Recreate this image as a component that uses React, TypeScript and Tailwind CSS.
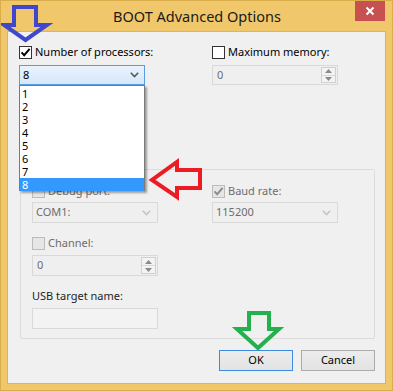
import React from "react";

function Check({ checked, disabled }: { checked?: boolean; disabled?: boolean }) {
  return (
    <span
      className={
        disabled
          ? "w-[13px] h-[13px] shrink-0 border border-[#bcbcbc] bg-[#e6e6e6] flex items-center justify-center"
          : "w-[13px] h-[13px] shrink-0 border border-[#333333] bg-white flex items-center justify-center"
      }
    >
      {checked && (
        <svg width="11" height="11" viewBox="0 0 11 11">
          <path d="M1.5 5.3 L4.2 8.2 L9.6 1.8" fill="none" stroke={disabled ? "#8c8c8c" : "#000"} strokeWidth="1.9" />
        </svg>
      )}
    </span>
  );
}

function CheckRow({ label, checked, disabled }: { label: string; checked?: boolean; disabled?: boolean }) {
  return (
    <div className="h-[16px] flex items-center gap-[3px] whitespace-nowrap">
      <Check checked={checked} disabled={disabled} />
      <span className={disabled ? "text-[#6d6d6d] leading-[16px]" : "text-black leading-[16px]"}>{label}</span>
    </div>
  );
}

function Chevron({ color }: { color: string }) {
  return (
    <svg width="9" height="6" viewBox="0 0 9 6">
      <path d="M0.8 0.8 L4.5 4.6 L8.2 0.8" fill="none" stroke={color} strokeWidth="1.5" />
    </svg>
  );
}

function DisabledCombo({ value }: { value: string }) {
  return (
    <div className="w-[126px] h-[21px] border border-[#d9d9d9] bg-[#efefef] flex items-center justify-between pl-[3px] pr-[6px]">
      <span className="text-[#6d6d6d]">{value}</span>
      <Chevron color="#c4c4c4" />
    </div>
  );
}

function Spin({ value, tall }: { value: string; tall?: boolean }) {
  return (
    <div
      className={
        tall
          ? "w-[126px] h-[21px] border border-[#d9d9d9] bg-[#efefef] flex items-stretch"
          : "w-[126px] h-[20px] border border-[#d9d9d9] bg-[#efefef] flex items-stretch"
      }
    >
      <span className="flex-1 pl-[4px] flex items-center text-[#6d6d6d]">{value}</span>
      <div className="w-[15px] flex flex-col my-[1px] mr-[1px] border border-[#d0d0d0]">
        <div className="flex-1 flex items-center justify-center border-b border-[#d9d9d9] bg-[#f3f3f3]">
          <svg width="7" height="4" viewBox="0 0 7 4"><path d="M0 4 L3.5 0 L7 4 Z" fill="#8a8a8a" /></svg>
        </div>
        <div className="flex-1 flex items-center justify-center bg-[#f3f3f3]">
          <svg width="7" height="4" viewBox="0 0 7 4"><path d="M0 0 L3.5 4 L7 0 Z" fill="#8a8a8a" /></svg>
        </div>
      </div>
    </div>
  );
}

export default function App() {
  const items = ["1", "2", "3", "4", "5", "6", "7", "8"];
  return (
    <div className="relative w-[393px] h-[391px] bg-[#f0c86b] border border-[#d9ad4c] overflow-hidden font-['Noto_Sans',sans-serif] text-[11px] text-black">
      {/* Title bar */}
      <div className="h-[30px] flex items-center justify-center">
        <span className="text-[14.5px] text-[#1a1a1a] pt-[1px] pl-[1px] whitespace-nowrap">BOOT Advanced Options</span>
      </div>
      <div className="absolute top-0 right-[7px] w-[30px] h-[20px] bg-[#c75050] flex items-center justify-center">
        <svg width="10" height="10" viewBox="0 0 10 10">
          <path d="M1.5 1.5 L8.5 8.5 M8.5 1.5 L1.5 8.5" stroke="#fff" strokeWidth="2" />
        </svg>
      </div>

      {/* Client area */}
      <div className="ml-[6px] w-[379px] h-[353px] bg-[#f0f0f0] border border-[#dcb558] pl-[11px] pt-[12px]">
        {/* Top row */}
        <div className="flex gap-[67px]">
          <div className="w-[126px] flex flex-col">
            <CheckRow label="Number of processors:" checked />
            <div className="relative mt-[5px]">
              <div className="w-[126px] h-[20px] border border-[#569de5] bg-gradient-to-b from-[#eaf3fd] to-[#d5e7fa] flex items-center justify-between pl-[3px] pr-[5px]">
                <span>8</span>
                <Chevron color="#555" />
              </div>
              {/* Open dropdown list */}
              <div className="absolute left-0 top-[20px] w-[126px] h-[106px] bg-white border border-[#7a7a7a] shadow-[2px_2px_2px_rgba(0,0,0,0.35)] z-10 pt-[1px]">
                {items.map((it) => (
                  <div
                    key={it}
                    className={
                      it === "8"
                        ? "h-[13px] leading-[13px] pl-[2px] bg-[#3399ff] text-white"
                        : "h-[13px] leading-[13px] pl-[2px] text-black"
                    }
                  >
                    {it}
                  </div>
                ))}
              </div>
            </div>
          </div>
          <div className="w-[126px] flex flex-col">
            <CheckRow label="Maximum memory:" />
            <div className="mt-[5px]">
              <Spin value="0" />
            </div>
          </div>
        </div>

        {/* Group box */}
        <div className="mt-[84px] ml-[1px] w-[355px] border border-[#dcdcdc] rounded-[2px] pl-[11px] pt-[13px] pb-[9px]">
          <div className="flex gap-[54px]">
            <div className="w-[126px] flex flex-col">
              <CheckRow label="Debug port:" disabled />
              <div className="mt-[3px]">
                <DisabledCombo value="COM1:" />
              </div>
              <div className="mt-[12px]">
                <CheckRow label="Channel:" disabled />
              </div>
              <div className="mt-[4px]">
                <Spin value="0" tall />
              </div>
              <div className="mt-[12px] h-[16px] flex items-center text-[#1f1f1f] whitespace-nowrap">USB target name:</div>
              <div className="mt-[4px] w-[126px] h-[21px] border border-[#d9d9d9] bg-[#f3f3f3]" />
            </div>
            <div className="w-[126px] flex flex-col">
              <CheckRow label="Baud rate:" checked disabled />
              <div className="mt-[3px]">
                <DisabledCombo value="115200" />
              </div>
            </div>
          </div>
        </div>

        {/* Buttons */}
        <div className="mt-[11px] w-[356px] flex justify-end gap-[8px]">
          <div className="w-[74px] h-[21px] border border-[#3c8be0] bg-gradient-to-b from-[#ececec] to-[#e3e3e3] flex items-center justify-center">
            OK
          </div>
          <div className="w-[74px] h-[21px] border border-[#acacac] bg-gradient-to-b from-[#ececec] to-[#e3e3e3] flex items-center justify-center">
            Cancel
          </div>
        </div>
      </div>

      {/* Annotation arrows */}
      <svg className="absolute left-[-1px] top-[-1px] pointer-events-none z-20" width="393" height="391" viewBox="0 0 393 391">
        <polygon points="14,7 36,7 36,25 47,25 25.5,40 4,25 14,25" fill="none" stroke="#3f48cc" strokeWidth="4" />
        <polygon points="200,170 177,170 177,162 152,180 177,197 177,188 200,188" fill="none" stroke="#ed1c24" strokeWidth="4" />
        <polygon points="249,313 269,313 269,329 279,329 258,348 237,329 249,329" fill="none" stroke="#22b14c" strokeWidth="4" />
      </svg>
    </div>
  );
}
